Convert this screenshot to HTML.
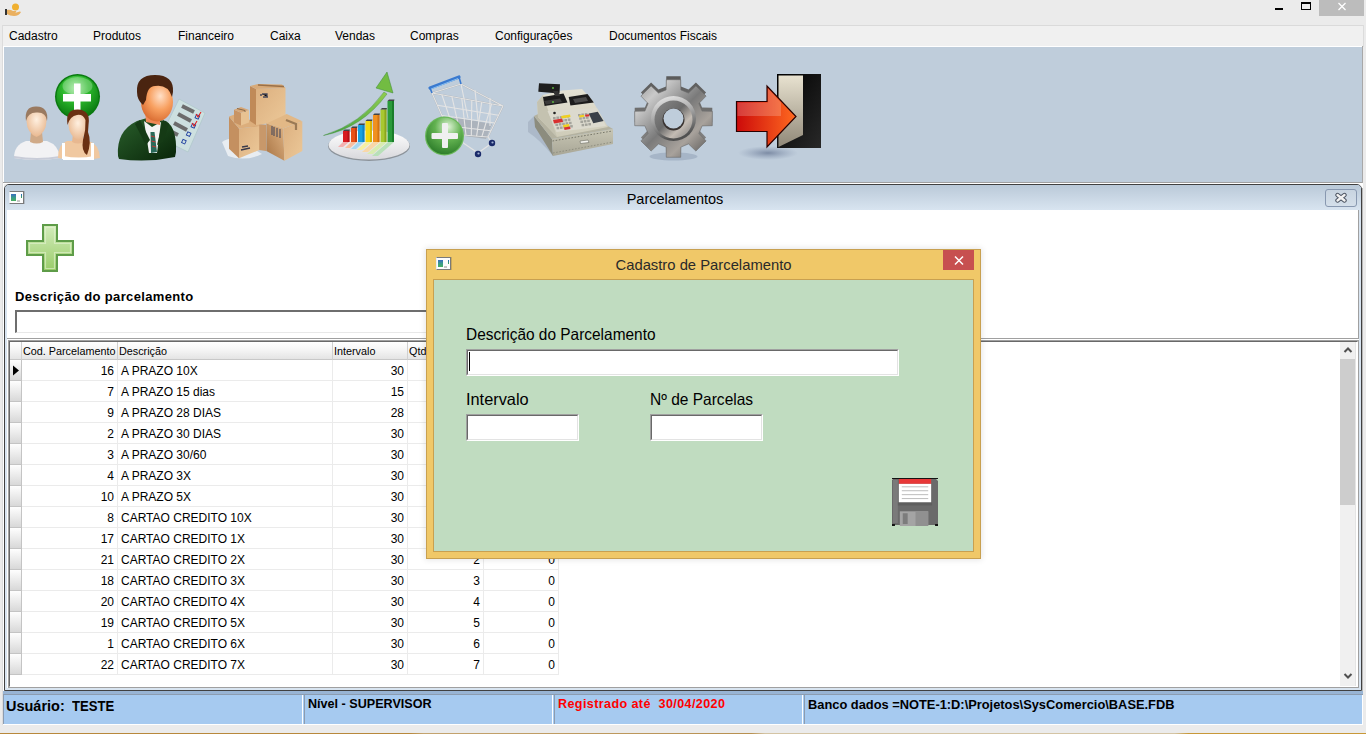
<!DOCTYPE html>
<html><head><meta charset="utf-8">
<style>
*{margin:0;padding:0;box-sizing:border-box}
html,body{width:1366px;height:734px;overflow:hidden;background:#ebebeb;font-family:"Liberation Sans",sans-serif;color:#000}
.a{position:absolute}
.menu span{position:absolute;top:29px;font-size:12px;line-height:14px;white-space:nowrap}
.gtxt{font-size:12px;line-height:14px;white-space:nowrap}
</style></head><body>
<!-- app icon -->
<svg class="a" style="left:4px;top:2px" width="18" height="16" viewBox="0 0 18 16">
<rect x="1" y="7" width="2" height="6" fill="#333"/>
<circle cx="11.5" cy="5" r="3.5" fill="#f0b030"/>
<path d="M3 8 Q6 7 9 9 L12 9 Q13 10 11 11 L14 10 Q16 9 17 10 Q15 14 10 14 Q6 14 3 12 Z" fill="#eab060"/>
</svg>
<!-- window buttons -->
<div class="a" style="left:1275px;top:8px;width:8px;height:2px;background:#000"></div>
<div class="a" style="left:1301px;top:2px;width:10px;height:8px;border:1px solid #000;border-top-width:2px"></div>
<div class="a" style="left:1319px;top:0;width:45px;height:16px;background:#bcbcbc"></div>
<svg class="a" style="left:1337px;top:2px" width="10" height="9" viewBox="0 0 10 9"><path d="M1.5 1 L8.5 8 M8.5 1 L1.5 8" stroke="#fff" stroke-width="1.3"/></svg>

<!-- menu bar -->
<div class="a" style="left:2px;top:25px;width:1362px;height:22px;background:#f0f0f0;border-top:1px solid #dadada;border-left:1px solid #dadada"></div>
<div class="menu">
<span style="left:9px">Cadastro</span>
<span style="left:93px">Produtos</span>
<span style="left:178px">Financeiro</span>
<span style="left:270px">Caixa</span>
<span style="left:335px">Vendas</span>
<span style="left:410px">Compras</span>
<span style="left:495px">Configurações</span>
<span style="left:609px">Documentos Fiscais</span>
</div>

<div class="a" style="left:2px;top:25px;width:1px;height:700px;background:#dcdcdc"></div>
<div class="a" style="left:3px;top:46px;width:1px;height:646px;background:#fff"></div>
<div class="a" style="left:3px;top:46px;width:1360px;height:1px;background:#fff"></div>
<div class="a" style="left:1362px;top:188px;width:1px;height:503px;background:#b8b8b8"></div><div class="a" style="left:1358px;top:183px;width:5px;height:5px;background:#fff"></div>
<!-- toolbar -->
<div class="a" style="left:4px;top:47px;width:1358px;height:135px;background:#bfcddb"></div>
<div class="a" style="left:3px;top:182px;width:1360px;height:1px;background:#a0a0a0"></div>
<div class="a" style="left:3px;top:183px;width:1360px;height:1px;background:#fff"></div>
<svg class="a" style="left:0;top:0" width="1366" height="182" viewBox="0 0 1366 182">
<defs>
<radialGradient id="gcirc" cx="0.45" cy="0.3" r="0.7"><stop offset="0" stop-color="#9ee89a"/><stop offset="0.45" stop-color="#2cb82c"/><stop offset="1" stop-color="#0a7a10"/></radialGradient>
<radialGradient id="skin" cx="0.5" cy="0.4" r="0.6"><stop offset="0" stop-color="#fff0e0"/><stop offset="1" stop-color="#e8b890"/></radialGradient>
<radialGradient id="skin2" cx="0.6" cy="0.35" r="0.7"><stop offset="0" stop-color="#ffe0c8"/><stop offset="0.5" stop-color="#f8a060"/><stop offset="1" stop-color="#d86a30"/></radialGradient>
<linearGradient id="suit" x1="0" y1="0" x2="1" y2="1"><stop offset="0" stop-color="#2a602c"/><stop offset="1" stop-color="#082408"/></linearGradient>
<linearGradient id="bxf" x1="0" y1="0" x2="1" y2="1"><stop offset="0" stop-color="#dcb080"/><stop offset="1" stop-color="#ecc898"/></linearGradient><linearGradient id="bxl" x1="0" y1="1" x2="1" y2="0"><stop offset="0" stop-color="#a87444"/><stop offset="1" stop-color="#e0b484"/></linearGradient><linearGradient id="box" x1="0" y1="0" x2="1" y2="0"><stop offset="0" stop-color="#c89060"/><stop offset="1" stop-color="#ecc698"/></linearGradient>
<linearGradient id="box2" x1="0" y1="0" x2="1" y2="0"><stop offset="0" stop-color="#b07840"/><stop offset="1" stop-color="#e8c090"/></linearGradient>
<linearGradient id="plate" x1="0" y1="0" x2="0" y2="1"><stop offset="0" stop-color="#ffffff"/><stop offset="1" stop-color="#d8d8dc"/></linearGradient>
<linearGradient id="arr" x1="0" y1="1" x2="1" y2="0"><stop offset="0" stop-color="#40a040"/><stop offset="1" stop-color="#90cc50"/></linearGradient>
<radialGradient id="gcirc2" cx="0.6" cy="0.25" r="0.8"><stop offset="0" stop-color="#e0f4d8"/><stop offset="0.45" stop-color="#62b250"/><stop offset="1" stop-color="#2a7a28"/></radialGradient>
<linearGradient id="regbody" x1="0" y1="0" x2="0" y2="1"><stop offset="0" stop-color="#e4e2d4"/><stop offset="1" stop-color="#cecbb8"/></linearGradient><linearGradient id="drawer" x1="0" y1="0" x2="0" y2="1"><stop offset="0" stop-color="#c8c6b4"/><stop offset="1" stop-color="#a8a696"/></linearGradient>
<linearGradient id="gearm" x1="0" y1="0" x2="1" y2="1"><stop offset="0" stop-color="#8a8a8a"/><stop offset="0.22" stop-color="#cacaca"/><stop offset="0.5" stop-color="#7a7a7a"/><stop offset="0.72" stop-color="#a8a29c"/><stop offset="1" stop-color="#484848"/></linearGradient><linearGradient id="gearin" x1="0" y1="0" x2="1" y2="1"><stop offset="0" stop-color="#8a8a8a"/><stop offset="0.45" stop-color="#6a6a6a"/><stop offset="0.7" stop-color="#c4bcb4"/><stop offset="1" stop-color="#7a7a7a"/></linearGradient><linearGradient id="gearback" x1="0" y1="0" x2="0" y2="1"><stop offset="0" stop-color="#5a5a5a"/><stop offset="1" stop-color="#8a8a8a"/></linearGradient>
<linearGradient id="ring" x1="0" y1="0" x2="0.3" y2="1"><stop offset="0" stop-color="#f0f0f0"/><stop offset="0.5" stop-color="#a8a8a8"/><stop offset="1" stop-color="#505050"/></linearGradient>
<linearGradient id="redarr" x1="0" y1="0" x2="1" y2="0"><stop offset="0" stop-color="#cc0a0a"/><stop offset="1" stop-color="#ff6a20"/></linearGradient>
<linearGradient id="door" x1="0" y1="0" x2="0" y2="1"><stop offset="0" stop-color="#e8e2d0"/><stop offset="1" stop-color="#908878"/></linearGradient>
<linearGradient id="doorbk" x1="0" y1="0" x2="1" y2="1"><stop offset="0" stop-color="#000"/><stop offset="1" stop-color="#282828"/></linearGradient>
<radialGradient id="shadow" cx="0.5" cy="0.5" r="0.5"><stop offset="0" stop-color="#506080" stop-opacity="0.6"/><stop offset="1" stop-color="#7080a0" stop-opacity="0"/></radialGradient>
</defs>

<!-- icon1: people add -->
<g>
<circle cx="77.5" cy="96.5" r="22.5" fill="#0a7a10"/>
<circle cx="77.5" cy="96.5" r="21" fill="url(#gcirc)"/>
<ellipse cx="77.5" cy="86" rx="15" ry="9" fill="#fff" opacity="0.25"/>
<rect x="63" y="94" width="28" height="7.5" fill="#fff"/>
<rect x="74" y="83.5" width="6.5" height="29" fill="#fff"/>
<!-- man -->
<path d="M14 158 Q14 145 26 141 L47 141 Q59 145 60 158 Q37 162 14 158 Z" fill="#f2f2f4"/>
<path d="M14 158 Q37 162 60 158 L60 156 Q37 160 14 156 Z" fill="#c8ccd8"/>
<path d="M31 132 L42 132 L43 142 Q37 145 30 142 Z" fill="#d0aa88"/>
<path d="M26.5 121 Q26 108 36.5 108 Q47 108 46.5 121 Q46 133 36.5 137 Q27 133 26.5 121 Z" fill="url(#skin)"/>
<path d="M26 121 Q24 106 36.5 106.5 Q49 107 47 121 Q46 112 37 112.5 Q28 112 26 121 Z" fill="#9a7a60"/>
<!-- woman -->
<path d="M58 158 Q58 144 67 141 L89 141 Q99 144 100 158 Q79 162 58 158 Z" fill="#f0c8a0"/>
<rect x="62" y="143" width="3" height="16" fill="#fff"/>
<rect x="91" y="143" width="3" height="16" fill="#fff"/>
<path d="M63 156 Q79 159 94 156 L94 160 L63 160 Z" fill="#fff"/>
<path d="M73 134 L83 134 L84 142 Q78 145 72 142 Z" fill="#e8b890"/>
<path d="M68.5 125 Q68 112 78 112 Q88 112 87.5 125 Q87 136 78 140 Q69 136 68.5 125 Z" fill="url(#skin)"/>
<path d="M67.5 125 Q65 109 78 109.5 Q91 110 88.5 125 L88 132 Q92 142 87 155 Q81 151 83 140 Q86 130 85.5 120 Q83 114 77 115 Q70 116 67.5 125 Z" fill="#6a3012"/>
</g>

<!-- icon2: businessman -->
<g>
<path d="M179 99 L205 113 L188 152 L160 138 Z" fill="#cde0e0" stroke="#b0c8cc" stroke-width="0.8"/>
<path d="M182 106 L194 112" stroke="#6c6c6c" stroke-width="4"/>
<path d="M178 114 L191 121" stroke="#6c6c6c" stroke-width="4"/>
<path d="M174 123 L187 130" stroke="#6c6c6c" stroke-width="4"/>
<path d="M170 131 L178 135" stroke="#6c6c6c" stroke-width="4"/>
<rect x="195.5" y="115" width="3.5" height="3.5" fill="none" stroke="#2040a0" stroke-width="0.9" transform="rotate(25 197 117)"/>
<path d="M196 114 L198 117 L201 112" stroke="#e02020" stroke-width="1.1" fill="none"/>
<rect x="191.5" y="124" width="3.5" height="3.5" fill="none" stroke="#2040a0" stroke-width="0.9" transform="rotate(25 193 126)"/>
<path d="M192 123 L194 126 L197 121" stroke="#e02020" stroke-width="1.1" fill="none"/>
<rect x="187" y="132.5" width="3.5" height="3.5" fill="none" stroke="#2040a0" stroke-width="0.9" transform="rotate(25 189 134)"/>
<rect x="182" y="140" width="3.5" height="3.5" fill="none" stroke="#2040a0" stroke-width="0.9" transform="rotate(25 184 142)"/>
<path d="M118 156 Q116 131 137 121 L147 118 L166 121 Q177 128 176 152 L175 157 Q147 163 119 159 Z" fill="url(#suit)"/>
<path d="M144 121 L152 127 L161 122 L157 153 L149 153 Z" fill="#f4f4f4"/>
<path d="M150.5 132 L154.5 132 L157 152 L151 153 Z" fill="#2a6a5a"/>
<path d="M151 136 L155 137 M151.5 141 L155.5 142 M152 146 L156 147" stroke="#d03030" stroke-width="0.9"/>
<path d="M140 120 L150 140 L146 145 L135 124 Z" fill="#153a15"/>
<path d="M163 120 L157 145 L163 142 L169 124 Z" fill="#153a15"/>
<path d="M145 110 L160 110 L160 125 L146 122 Z" fill="#f08858"/>
<ellipse cx="157" cy="102" rx="16" ry="19.5" fill="url(#skin2)"/>
<path d="M137 92 Q136 75 155 75 Q174 75 173 92 L172 97 Q168 84 155 86 Q147 86 146 100 L143 105 Q137 100 137 92 Z" fill="#4a2410"/>
</g>

<!-- icon3: boxes -->
<g>
<path d="M222 142 Q230 136 240 140 L262 154 Q245 162 228 156 Z" fill="#eef2f6" opacity="0.85"/>
<path d="M250 123 L266 124.8 L266 151 L259 150 Z" fill="#c8986a"/>
<path d="M229 116.4 L239 128.4 L239 158.3 L229 148.7 Z" fill="#c49060"/>
<path d="M239 128.4 L259.2 126 L259.2 150 L239 158.3 Z" fill="url(#bxf)"/>
<path d="M229 116.4 L236 114 L259.2 124 L259.2 126 L239 128.4 Z" fill="#dcae7c"/>
<path d="M234 109.8 L241 112.8 L241 125.4 L234 122.4 Z" fill="#c89464"/>
<path d="M241 112.8 L249 110 L249 122.4 L241 125.4 Z" fill="#e8c292"/>
<path d="M234 109.8 L241 107 L249 110 L241 112.8 Z" fill="#d8a878"/>
<path d="M237 108.5 L245 110.5 L245 112" stroke="#8a6a48" stroke-width="1" fill="none"/>
<path d="M250 86 L256 89 L256 125 L250 121 Z" fill="#c08a58"/>
<path d="M256 89 L285.5 88 L285.5 121 L256 125 Z" fill="url(#bxf)"/>
<path d="M250 86 L258 84 L282 84.5 L285.5 88 L256 89 Z" fill="#d8aa78"/>
<path d="M258 85 L284 86.5" stroke="#9a7048" stroke-width="1.4"/>
<path d="M266.4 123.6 L283.2 128.4 L284.4 160.7 L266.4 151 Z" fill="url(#bxl)"/>
<path d="M283.2 128.4 L302.3 121.2 L302.3 151.1 L284.4 160.7 Z" fill="url(#bxf)"/>
<path d="M266.4 123.6 L286.7 114 L302.3 121.2 L283.2 128.4 Z" fill="#e2b886"/>
<path d="M286 120 L296 124 L296 130" stroke="#8a6a48" stroke-width="2.2" fill="none" opacity="0.8"/>
<path d="M260 95 L262 95 M262 94 L267 94 L267 97 M263 97 L268 97" stroke="#4a4a5a" stroke-width="1.3"/>
<path d="M272 126 L272 135 M274 127 L274 136 M277 128 L277 137 M280 129 L280 138" stroke="#4a4a5a" stroke-width="1.1"/>
<path d="M241 150 L250 148 M242 147 L248 146" stroke="#3a3a4a" stroke-width="1.5"/>
</g>

<!-- icon4: chart -->
<g>
<ellipse cx="369" cy="146" rx="41" ry="15" fill="#5a5a5a" opacity="0.5"/>
<ellipse cx="369" cy="145" rx="40.5" ry="14.5" fill="url(#plate)"/>
<path d="M343 142 L349 142 L343 147 L338 147 Z" fill="#f4b0b0"/>
<path d="M351 142 L357 142 L350 148 L345 148 Z" fill="#f8c0a0"/>
<path d="M358 142 L364 142 L356 149 L351 149 Z" fill="#a8d8f0"/>
<path d="M366 142 L372 142 L362 150 L357 150 Z" fill="#f8f0a0"/>
<path d="M373 142 L380 142 L368 152 L362 152 Z" fill="#f8d8a8"/>
<path d="M381 142 L387 142 L373 154 L367 154 Z" fill="#d8ecb0"/>
<path d="M388 142 L394 142 L378 156 L372 156 Z" fill="#b8e0b8"/>
<rect x="343" y="131" width="6.5" height="11" fill="#d81a20"/>
<rect x="347.5" y="131" width="2" height="11" fill="#a00c10" opacity="0.6"/>
<path d="M343 131 L344.5 129.5 L350.0 129.5 L349.5 131 Z" fill="#2a2a2a" opacity="0.85"/>
<rect x="351" y="128" width="6" height="14" fill="#e85018"/>
<rect x="355" y="128" width="2" height="14" fill="#b03008" opacity="0.6"/>
<path d="M351 128 L352.5 126.5 L357.5 126.5 L357 128 Z" fill="#2a2a2a" opacity="0.85"/>
<rect x="358" y="125" width="6.5" height="17" fill="#18a0e0"/>
<rect x="362.5" y="125" width="2" height="17" fill="#0a70b0" opacity="0.6"/>
<path d="M358 125 L359.5 123.5 L365.0 123.5 L364.5 125 Z" fill="#2a2a2a" opacity="0.85"/>
<rect x="365.5" y="121" width="6.5" height="21" fill="#f4d810"/>
<rect x="370.0" y="121" width="2" height="21" fill="#c0a000" opacity="0.6"/>
<path d="M365.5 121 L367.0 119.5 L372.5 119.5 L372.0 121 Z" fill="#2a2a2a" opacity="0.85"/>
<rect x="373" y="115" width="6.5" height="27" fill="#f09020"/>
<rect x="377.5" y="115" width="2" height="27" fill="#c06008" opacity="0.6"/>
<path d="M373 115 L374.5 113.5 L380.0 113.5 L379.5 115 Z" fill="#2a2a2a" opacity="0.85"/>
<rect x="380.5" y="109.5" width="6" height="32.5" fill="#a8c830"/>
<rect x="384.5" y="109.5" width="2" height="32.5" fill="#789010" opacity="0.6"/>
<path d="M380.5 109.5 L382.0 108.0 L387.0 108.0 L386.5 109.5 Z" fill="#2a2a2a" opacity="0.85"/>
<rect x="387.5" y="101" width="6.5" height="41" fill="#2a9a3a"/>
<rect x="392.0" y="101" width="2" height="41" fill="#106a20" opacity="0.6"/>
<path d="M387.5 101 L389.0 99.5 L394.5 99.5 L394.0 101 Z" fill="#2a2a2a" opacity="0.85"/>
<path d="M323.5 135.5 Q361 124 384 92 L387 94 Q362 128 323.5 135.5 Z" fill="url(#arr)" stroke="#3a8a30" stroke-width="0.4"/>
<path d="M387 72 L376 88 L393 93 Z" fill="#72bc42" stroke="#3a8a30" stroke-width="0.5"/>
</g>

<!-- icon5: cart -->
<g>
<path d="M453 117 L492 124 L486 139 L451 134 Z" fill="#a8acb4" opacity="0.8"/>
</g>
<g fill="none" stroke="#9a9a9a" stroke-width="1.6" opacity="0.55">
<path d="M432 93 L461 84 L503 106 L488 137 L450 134 Z M432 93 L503 106"/>
</g>
<g fill="none" stroke="#e4e4e4" stroke-width="1.1">
<path d="M432 93 L461 84 L503 106 L488 137 L450 134 Z M432 93 L503 106"/>
<path d="M461 84 L468 118 M475 90 L478 120 M490 98 L490 126"/>
<path d="M437.4 105.3 L498.5 115.3 M441.9 115.5 L494.8 123.0 M446.4 125.8 L491.0 130.8 M441.9 94.8 L455.3 134.4 M451.9 96.6 L460.6 134.8 M461.8 98.5 L466.0 135.3 M471.8 100.3 L471.3 135.7 M481.7 102.1 L476.6 136.1 M491.6 103.9 L481.9 136.5"/>
<path d="M450 134 L478 153 L492 143 L488 137"/>
</g>
<g>
<path d="M430 88 L459 77" stroke="#3a7ad0" stroke-width="3.2" stroke-linecap="round"/>
<path d="M431 89 L458 78.5" stroke="#8ac0f0" stroke-width="1"/>
<path d="M430 88 L432 93 M459 77 L461 84" stroke="#3a7ad0" stroke-width="1.6"/>
<circle cx="478" cy="154" r="3.2" fill="#1a2a6a"/>
<circle cx="478.5" cy="153.5" r="1.1" fill="#a0b0d0"/>
<circle cx="492" cy="143" r="3.2" fill="#1a2a6a"/>
<circle cx="492.5" cy="142.5" r="1.1" fill="#a0b0d0"/>
<circle cx="444.5" cy="136" r="19.5" fill="#6ab85a"/>
<circle cx="444.5" cy="136" r="18.3" fill="url(#gcirc2)"/>
<rect x="431.5" y="133" width="26.5" height="6" rx="1" fill="#f0f0f0"/>
<rect x="442" y="123" width="6" height="25" rx="1" fill="#f0f0f0"/>
</g>

<!-- icon6: cash register -->
<g>
<path d="M528 122 L534 116 L552 140 L553 156 Q540 140 528 132 Z" fill="#9aa6b8" opacity="0.5"/>
<path d="M534 116 L552 139 L553 156 L535 127 Z" fill="#8c8c7e"/>
<path d="M552 139 L613 129 L613 144 L553 156 Z" fill="url(#drawer)"/>
<path d="M534 116 L540 113 L606 125 L613 129 L552 139 Z" fill="#b4b2a0"/>
<path d="M552.5 141 L612.5 131" stroke="#707064" stroke-width="0.9" stroke-dasharray="1.6 1.6"/>
<path d="M553 153 L613 142" stroke="#8a8a7c" stroke-width="0.9" stroke-dasharray="1.6 1.6"/>
<path d="M580 141 L588 140 L589 142.5 L580.5 143.5 Z" fill="#f4f4ee" stroke="#6a6a60" stroke-width="0.6"/>
<path d="M537 102 L543 95 L562 90.5 L582 89 L592 100 L608 127 L557 137 L538 117 Z" fill="url(#regbody)"/>
<path d="M537 102 L543 95 L557 137 L538 117 Z" fill="#c4c2b0"/>
<path d="M547.5 111 L597 108 L606 126 L556.5 132 Z" fill="#dcdace"/>
<path d="M543 97 L563.5 93.5 L567.5 102.6 L544.6 106 Z" fill="#1c1c1c"/>
<path d="M568.7 96.9 L587.5 94 L593.8 102.6 L570.4 105.5 Z" fill="#1c1c1c"/>
<path d="M539 83.2 L560 84.3 L559.5 93.5 L538.3 91.7 Z" fill="#1e1e1e"/><path d="M544 101 L560 98.5 L562 102 L546 104.5 Z" fill="#3a3a3a"/><path d="M573 99 L586 97 L588 101 L575 103 Z" fill="#4a4a4a"/><circle cx="553" cy="88" r="0.9" fill="#60c040"/><circle cx="553" cy="102" r="0.9" fill="#60c040"/>
<path d="M553 91 L558 91 L560 96 L555 96 Z" fill="#333"/>
<path d="M588.7 113.5 L597.8 111.8 L603.6 121 L593.3 123.2 Z" fill="#3a4048"/>
<g fill="#a4a49c">
<rect x="553.0" y="117.0" width="2.6" height="2.4"/>
<rect x="556.4" y="116.5" width="2.6" height="2.4"/>
<rect x="559.8" y="116.1" width="2.6" height="2.4"/>
<rect x="563.2" y="115.7" width="2.6" height="2.4"/>
<rect x="566.6" y="115.2" width="2.6" height="2.4"/>
<rect x="554.2" y="120.3" width="2.6" height="2.4"/>
<rect x="557.6" y="119.8" width="2.6" height="2.4"/>
<rect x="561.0" y="119.4" width="2.6" height="2.4"/>
<rect x="564.4" y="119.0" width="2.6" height="2.4"/>
<rect x="567.8" y="118.5" width="2.6" height="2.4"/>
<rect x="555.4" y="123.6" width="2.6" height="2.4"/>
<rect x="558.8" y="123.1" width="2.6" height="2.4"/>
<rect x="562.2" y="122.7" width="2.6" height="2.4"/>
<rect x="565.6" y="122.2" width="2.6" height="2.4"/>
<rect x="569.0" y="121.8" width="2.6" height="2.4"/>
<rect x="556.6" y="126.9" width="2.6" height="2.4"/>
<rect x="560.0" y="126.5" width="2.6" height="2.4"/>
<rect x="563.4" y="126.0" width="2.6" height="2.4"/>
<rect x="566.8" y="125.6" width="2.6" height="2.4"/>
<rect x="570.2" y="125.1" width="2.6" height="2.4"/>
<rect x="578.0" y="114.0" width="2.6" height="2.4"/>
<rect x="581.4" y="113.5" width="2.6" height="2.4"/>
<rect x="584.8" y="113.1" width="2.6" height="2.4"/>
<rect x="579.2" y="117.3" width="2.6" height="2.4"/>
<rect x="582.6" y="116.8" width="2.6" height="2.4"/>
<rect x="586.0" y="116.4" width="2.6" height="2.4"/>
<rect x="580.4" y="120.6" width="2.6" height="2.4"/>
<rect x="583.8" y="120.1" width="2.6" height="2.4"/>
<rect x="587.2" y="119.7" width="2.6" height="2.4"/>
<rect x="581.6" y="123.9" width="2.6" height="2.4"/>
<rect x="585.0" y="123.5" width="2.6" height="2.4"/>
<rect x="588.4" y="123.0" width="2.6" height="2.4"/>
</g>
<path d="M553 120 L562 118.5 L563 122 L554 123.5 Z" fill="#d83030"/>
<path d="M561 116 L570 114.5 L570.5 117 L562 118.5 Z" fill="#f0d020"/>
<path d="M563 125 L569 124 L569.5 126.5 L563.5 127.5 Z" fill="#f0d020"/>
<path d="M564 127.5 L570 126.5 L570.5 129 L564.5 130 Z" fill="#d83030"/>
<path d="M579 115.5 L584 114.8 L584.5 116.8 L579.5 117.5 Z" fill="#f0d020"/>
<path d="M585 114.8 L589 114.2 L589.5 116.2 L585.5 116.8 Z" fill="#d83030"/>
<circle cx="554.5" cy="113" r="1.3" fill="#222"/>
</g>

<!-- icon7: gear -->
<g transform="translate(673.5 118.5)">
<ellipse cx="0" cy="38" rx="24" ry="4" fill="#8898b0" opacity="0.45"/>
<path transform="translate(0 -3.5)" d="M-7.4 -28.6 L-7.2 -38.8 L7.2 -38.8 L7.4 -28.6 L15.0 -25.4 L22.4 -32.6 L32.6 -22.4 L25.4 -15.0 L28.6 -7.4 L38.8 -7.2 L38.8 7.2 L28.6 7.4 L25.4 15.0 L32.6 22.4 L22.4 32.6 L15.0 25.4 L7.4 28.6 L7.2 38.8 L-7.2 38.8 L-7.4 28.6 L-15.0 25.4 L-22.4 32.6 L-32.6 22.4 L-25.4 15.0 L-28.6 7.4 L-38.8 7.2 L-38.8 -7.2 L-28.6 -7.4 L-25.4 -15.0 L-32.6 -22.4 L-22.4 -32.6 L-15.0 -25.4 Z" fill="url(#gearback)"/>
<path d="M-7.4 -28.6 L-7.2 -38.8 L7.2 -38.8 L7.4 -28.6 L15.0 -25.4 L22.4 -32.6 L32.6 -22.4 L25.4 -15.0 L28.6 -7.4 L38.8 -7.2 L38.8 7.2 L28.6 7.4 L25.4 15.0 L32.6 22.4 L22.4 32.6 L15.0 25.4 L7.4 28.6 L7.2 38.8 L-7.2 38.8 L-7.4 28.6 L-15.0 25.4 L-22.4 32.6 L-32.6 22.4 L-25.4 15.0 L-28.6 7.4 L-38.8 7.2 L-38.8 -7.2 L-28.6 -7.4 L-25.4 -15.0 L-32.6 -22.4 L-22.4 -32.6 L-15.0 -25.4 Z" fill="url(#gearm)" stroke="#6a6a6a" stroke-width="0.6"/>
<circle r="22.5" fill="url(#ring)"/>
<circle cy="1" r="19" fill="url(#gearin)"/>
<circle cy="1" r="11" fill="#3a3432"/>
<circle cy="0" r="10" fill="#bfcddb"/>
</g>
<!-- icon8: exit -->
<g>
<ellipse cx="768" cy="153" rx="30" ry="7" fill="url(#shadow)"/>
<rect x="777" y="74" width="44" height="74" fill="url(#doorbk)"/>
<path d="M778.5 75.5 L803 75.5 L803 135 L778.5 147 Z" fill="url(#door)"/>
<path d="M736.5 101.5 L767 101.5 L767 86 L796 116.5 L767 147 L767 131.5 L736.5 131.5 Z" fill="url(#redarr)" stroke="#2a0000" stroke-width="1.2"/>
<path d="M737.5 102.5 L768 102.5 L768 88.5 L781 102.5 L781 116 L737.5 116 Z" fill="#ffffff" opacity="0.2"/>
</g>
</svg>


<div class="a" style="left:1363px;top:25px;width:1px;height:22px;background:#dcdcdc"></div>
<div class="a" style="left:1362px;top:46px;width:1px;height:137px;background:#a8a8a8"></div>
<!-- MDI child -->
<div class="a" style="left:4px;top:184px;width:1358px;height:507px;border:1px solid #404040;border-radius:5px 5px 0 0;background:#d8e4f0"></div>
<div class="a" style="left:5px;top:185px;width:1356px;height:25px;border-radius:4px 4px 0 0;background:linear-gradient(#bac9d8,#d8e4f0)"></div>
<div class="a" style="left:7px;top:210px;width:1352px;height:478px;background:#fff"></div>
<div class="a" style="left:9px;top:191px;width:15px;height:13px;background:#fdfdfd;border-top:1px solid #7a7a7a;border-bottom:1px solid #7a7a7a;border-right:1px solid #7a7a7a;border-left:1px solid #e8eef4;box-shadow:1px 0 0 rgba(0,0,0,0.15)"><div class="a" style="left:1px;top:2px;width:5px;height:7px;background:linear-gradient(#3a6cc0,#3a9a8a 50%,#48b060)"></div><div class="a" style="left:11px;top:2px;width:1px;height:4px;background:linear-gradient(#2a60c8,#40b050)"></div><div class="a" style="left:7px;top:8px;width:3px;height:2px;background:#c8c8c8"></div></div>
<div class="a" style="left:575px;top:191px;width:200px;text-align:center;font-size:14.5px;line-height:17px;color:#000">Parcelamentos</div>
<div class="a" style="left:1325px;top:189px;width:32px;height:18px;border:1px solid #8898b0;border-radius:3px;background:linear-gradient(#c8d4e0,#d4dfea)"></div>
<svg class="a" style="left:1334px;top:192px" width="14" height="12" viewBox="0 0 14 12"><path d="M3.5 3 L10.5 8.5 M10.5 3 L3.5 8.5" stroke="#4a5260" stroke-width="4.4" stroke-linecap="round"/><path d="M3.5 3 L10.5 8.5 M10.5 3 L3.5 8.5" stroke="#f2f2f2" stroke-width="2.4" stroke-linecap="round"/></svg>
<svg class="a" style="left:26px;top:224px" width="48" height="48" viewBox="0 0 48 48"><defs><linearGradient id="pg" x1="0" y1="0" x2="0" y2="1"><stop offset="0" stop-color="#d4ecbc"/><stop offset="1" stop-color="#98cc68"/></linearGradient></defs><path d="M17 1 H31 V17 H47 V31 H31 V47 H17 V31 H1 V17 H17 Z" fill="url(#pg)" stroke="#5e9c48" stroke-width="2"/><path d="M19.5 3.5 H28.5 V19.5 H44.5 V28.5 H28.5 V44.5 H19.5 V28.5 H3.5 V19.5 H19.5 Z" fill="none" stroke="#e4f4d4" stroke-opacity="0.6" stroke-width="1.2"/></svg>
<div class="a" style="left:15px;top:289px;font-size:13px;font-weight:bold;line-height:15px;letter-spacing:0.35px;white-space:nowrap">Descrição do parcelamento</div>
<div class="a" style="left:15px;top:310px;width:500px;height:23px;background:#fff;border-top:2px solid #6e6e6e;border-left:2px solid #6e6e6e;border-bottom:1px solid #e8e8e8"></div>
<div class="a" style="left:7px;top:338px;width:1352px;height:1px;background:#a0a0a0"></div>
<div class="a" style="left:1358px;top:210px;width:1px;height:129px;background:#a0a0a0"></div>
<div class="a" style="left:8px;top:340px;width:1351px;height:348px;border-top:1px solid #a0a0a0;border-left:1px solid #a0a0a0;border-right:1px solid #a0a0a0;border-bottom:1px solid #a0a0a0"></div>
<div class="a" style="left:9px;top:341px;width:1349px;height:346px;border-top:1px solid #696969;border-left:1px solid #696969;border-right:1px solid #fff;border-bottom:1px solid #fff"></div>
<div class="a" style="left:10px;top:342px;width:12px;height:18px;background:linear-gradient(#ffffff,#f4f4f4 50%,#e4e4e4);border-right:1px solid #d0d0d0;border-bottom:1px solid #c8c8c8;overflow:hidden"><span class="a" style="left:1px;top:3px;font-size:10.8px;line-height:13px;white-space:nowrap;color:#000"></span></div>
<div class="a" style="left:22px;top:342px;width:96px;height:18px;background:linear-gradient(#ffffff,#f4f4f4 50%,#e4e4e4);border-right:1px solid #d0d0d0;border-bottom:1px solid #c8c8c8;overflow:hidden"><span class="a" style="left:1px;top:3px;font-size:10.8px;line-height:13px;white-space:nowrap;color:#000">Cod. Parcelamento</span></div>
<div class="a" style="left:118px;top:342px;width:215px;height:18px;background:linear-gradient(#ffffff,#f4f4f4 50%,#e4e4e4);border-right:1px solid #d0d0d0;border-bottom:1px solid #c8c8c8;overflow:hidden"><span class="a" style="left:1px;top:3px;font-size:10.8px;line-height:13px;white-space:nowrap;color:#000">Descrição</span></div>
<div class="a" style="left:333px;top:342px;width:75px;height:18px;background:linear-gradient(#ffffff,#f4f4f4 50%,#e4e4e4);border-right:1px solid #d0d0d0;border-bottom:1px solid #c8c8c8;overflow:hidden"><span class="a" style="left:1px;top:3px;font-size:10.8px;line-height:13px;white-space:nowrap;color:#000">Intervalo</span></div>
<div class="a" style="left:408px;top:342px;width:76px;height:18px;background:linear-gradient(#ffffff,#f4f4f4 50%,#e4e4e4);border-right:1px solid #d0d0d0;border-bottom:1px solid #c8c8c8;overflow:hidden"><span class="a" style="left:1px;top:3px;font-size:10.8px;line-height:13px;white-space:nowrap;color:#000">Qtde Parcelas</span></div>
<div class="a" style="left:484px;top:342px;width:75px;height:18px;background:linear-gradient(#ffffff,#f4f4f4 50%,#e4e4e4);border-right:1px solid #d0d0d0;border-bottom:1px solid #c8c8c8;overflow:hidden"><span class="a" style="left:1px;top:3px;font-size:10.8px;line-height:13px;white-space:nowrap;color:#000"></span></div>
<div class="a" style="left:10px;top:360px;width:12px;height:21px;background:linear-gradient(#fefefe,#d8d8d8);border-right:1px solid #c4c4c4;border-bottom:1px solid #c4c4c4"></div>
<div class="a" style="left:22px;top:380px;width:537px;height:1px;background:#ebebeb"></div>
<div class="a" style="left:117px;top:360px;width:1px;height:21px;background:#ebebeb"></div>
<div class="a" style="left:332px;top:360px;width:1px;height:21px;background:#ebebeb"></div>
<div class="a" style="left:407px;top:360px;width:1px;height:21px;background:#ebebeb"></div>
<div class="a" style="left:483px;top:360px;width:1px;height:21px;background:#ebebeb"></div>
<div class="a" style="left:558px;top:360px;width:1px;height:21px;background:#ebebeb"></div>
<div class="a gtxt" style="left:22px;top:364px;width:92px;text-align:right;font-size:12px">16</div>
<div class="a gtxt" style="left:121px;top:364px;font-size:12px">A PRAZO 10X</div>
<div class="a gtxt" style="left:333px;top:364px;width:71px;text-align:right;font-size:12px">30</div>
<div class="a" style="left:10px;top:381px;width:12px;height:21px;background:linear-gradient(#fefefe,#d8d8d8);border-right:1px solid #c4c4c4;border-bottom:1px solid #c4c4c4"></div>
<div class="a" style="left:22px;top:401px;width:537px;height:1px;background:#ebebeb"></div>
<div class="a" style="left:117px;top:381px;width:1px;height:21px;background:#ebebeb"></div>
<div class="a" style="left:332px;top:381px;width:1px;height:21px;background:#ebebeb"></div>
<div class="a" style="left:407px;top:381px;width:1px;height:21px;background:#ebebeb"></div>
<div class="a" style="left:483px;top:381px;width:1px;height:21px;background:#ebebeb"></div>
<div class="a" style="left:558px;top:381px;width:1px;height:21px;background:#ebebeb"></div>
<div class="a gtxt" style="left:22px;top:385px;width:92px;text-align:right;font-size:12px">7</div>
<div class="a gtxt" style="left:121px;top:385px;font-size:12px">A PRAZO 15 dias</div>
<div class="a gtxt" style="left:333px;top:385px;width:71px;text-align:right;font-size:12px">15</div>
<div class="a" style="left:10px;top:402px;width:12px;height:21px;background:linear-gradient(#fefefe,#d8d8d8);border-right:1px solid #c4c4c4;border-bottom:1px solid #c4c4c4"></div>
<div class="a" style="left:22px;top:422px;width:537px;height:1px;background:#ebebeb"></div>
<div class="a" style="left:117px;top:402px;width:1px;height:21px;background:#ebebeb"></div>
<div class="a" style="left:332px;top:402px;width:1px;height:21px;background:#ebebeb"></div>
<div class="a" style="left:407px;top:402px;width:1px;height:21px;background:#ebebeb"></div>
<div class="a" style="left:483px;top:402px;width:1px;height:21px;background:#ebebeb"></div>
<div class="a" style="left:558px;top:402px;width:1px;height:21px;background:#ebebeb"></div>
<div class="a gtxt" style="left:22px;top:406px;width:92px;text-align:right;font-size:12px">9</div>
<div class="a gtxt" style="left:121px;top:406px;font-size:12px">A PRAZO 28 DIAS</div>
<div class="a gtxt" style="left:333px;top:406px;width:71px;text-align:right;font-size:12px">28</div>
<div class="a" style="left:10px;top:423px;width:12px;height:21px;background:linear-gradient(#fefefe,#d8d8d8);border-right:1px solid #c4c4c4;border-bottom:1px solid #c4c4c4"></div>
<div class="a" style="left:22px;top:443px;width:537px;height:1px;background:#ebebeb"></div>
<div class="a" style="left:117px;top:423px;width:1px;height:21px;background:#ebebeb"></div>
<div class="a" style="left:332px;top:423px;width:1px;height:21px;background:#ebebeb"></div>
<div class="a" style="left:407px;top:423px;width:1px;height:21px;background:#ebebeb"></div>
<div class="a" style="left:483px;top:423px;width:1px;height:21px;background:#ebebeb"></div>
<div class="a" style="left:558px;top:423px;width:1px;height:21px;background:#ebebeb"></div>
<div class="a gtxt" style="left:22px;top:427px;width:92px;text-align:right;font-size:12px">2</div>
<div class="a gtxt" style="left:121px;top:427px;font-size:12px">A PRAZO 30 DIAS</div>
<div class="a gtxt" style="left:333px;top:427px;width:71px;text-align:right;font-size:12px">30</div>
<div class="a" style="left:10px;top:444px;width:12px;height:21px;background:linear-gradient(#fefefe,#d8d8d8);border-right:1px solid #c4c4c4;border-bottom:1px solid #c4c4c4"></div>
<div class="a" style="left:22px;top:464px;width:537px;height:1px;background:#ebebeb"></div>
<div class="a" style="left:117px;top:444px;width:1px;height:21px;background:#ebebeb"></div>
<div class="a" style="left:332px;top:444px;width:1px;height:21px;background:#ebebeb"></div>
<div class="a" style="left:407px;top:444px;width:1px;height:21px;background:#ebebeb"></div>
<div class="a" style="left:483px;top:444px;width:1px;height:21px;background:#ebebeb"></div>
<div class="a" style="left:558px;top:444px;width:1px;height:21px;background:#ebebeb"></div>
<div class="a gtxt" style="left:22px;top:448px;width:92px;text-align:right;font-size:12px">3</div>
<div class="a gtxt" style="left:121px;top:448px;font-size:12px">A PRAZO 30/60</div>
<div class="a gtxt" style="left:333px;top:448px;width:71px;text-align:right;font-size:12px">30</div>
<div class="a" style="left:10px;top:465px;width:12px;height:21px;background:linear-gradient(#fefefe,#d8d8d8);border-right:1px solid #c4c4c4;border-bottom:1px solid #c4c4c4"></div>
<div class="a" style="left:22px;top:485px;width:537px;height:1px;background:#ebebeb"></div>
<div class="a" style="left:117px;top:465px;width:1px;height:21px;background:#ebebeb"></div>
<div class="a" style="left:332px;top:465px;width:1px;height:21px;background:#ebebeb"></div>
<div class="a" style="left:407px;top:465px;width:1px;height:21px;background:#ebebeb"></div>
<div class="a" style="left:483px;top:465px;width:1px;height:21px;background:#ebebeb"></div>
<div class="a" style="left:558px;top:465px;width:1px;height:21px;background:#ebebeb"></div>
<div class="a gtxt" style="left:22px;top:469px;width:92px;text-align:right;font-size:12px">4</div>
<div class="a gtxt" style="left:121px;top:469px;font-size:12px">A PRAZO 3X</div>
<div class="a gtxt" style="left:333px;top:469px;width:71px;text-align:right;font-size:12px">30</div>
<div class="a" style="left:10px;top:486px;width:12px;height:21px;background:linear-gradient(#fefefe,#d8d8d8);border-right:1px solid #c4c4c4;border-bottom:1px solid #c4c4c4"></div>
<div class="a" style="left:22px;top:506px;width:537px;height:1px;background:#ebebeb"></div>
<div class="a" style="left:117px;top:486px;width:1px;height:21px;background:#ebebeb"></div>
<div class="a" style="left:332px;top:486px;width:1px;height:21px;background:#ebebeb"></div>
<div class="a" style="left:407px;top:486px;width:1px;height:21px;background:#ebebeb"></div>
<div class="a" style="left:483px;top:486px;width:1px;height:21px;background:#ebebeb"></div>
<div class="a" style="left:558px;top:486px;width:1px;height:21px;background:#ebebeb"></div>
<div class="a gtxt" style="left:22px;top:490px;width:92px;text-align:right;font-size:12px">10</div>
<div class="a gtxt" style="left:121px;top:490px;font-size:12px">A PRAZO 5X</div>
<div class="a gtxt" style="left:333px;top:490px;width:71px;text-align:right;font-size:12px">30</div>
<div class="a" style="left:10px;top:507px;width:12px;height:21px;background:linear-gradient(#fefefe,#d8d8d8);border-right:1px solid #c4c4c4;border-bottom:1px solid #c4c4c4"></div>
<div class="a" style="left:22px;top:527px;width:537px;height:1px;background:#ebebeb"></div>
<div class="a" style="left:117px;top:507px;width:1px;height:21px;background:#ebebeb"></div>
<div class="a" style="left:332px;top:507px;width:1px;height:21px;background:#ebebeb"></div>
<div class="a" style="left:407px;top:507px;width:1px;height:21px;background:#ebebeb"></div>
<div class="a" style="left:483px;top:507px;width:1px;height:21px;background:#ebebeb"></div>
<div class="a" style="left:558px;top:507px;width:1px;height:21px;background:#ebebeb"></div>
<div class="a gtxt" style="left:22px;top:511px;width:92px;text-align:right;font-size:12px">8</div>
<div class="a gtxt" style="left:121px;top:511px;font-size:12px">CARTAO CREDITO 10X</div>
<div class="a gtxt" style="left:333px;top:511px;width:71px;text-align:right;font-size:12px">30</div>
<div class="a" style="left:10px;top:528px;width:12px;height:21px;background:linear-gradient(#fefefe,#d8d8d8);border-right:1px solid #c4c4c4;border-bottom:1px solid #c4c4c4"></div>
<div class="a" style="left:22px;top:548px;width:537px;height:1px;background:#ebebeb"></div>
<div class="a" style="left:117px;top:528px;width:1px;height:21px;background:#ebebeb"></div>
<div class="a" style="left:332px;top:528px;width:1px;height:21px;background:#ebebeb"></div>
<div class="a" style="left:407px;top:528px;width:1px;height:21px;background:#ebebeb"></div>
<div class="a" style="left:483px;top:528px;width:1px;height:21px;background:#ebebeb"></div>
<div class="a" style="left:558px;top:528px;width:1px;height:21px;background:#ebebeb"></div>
<div class="a gtxt" style="left:22px;top:532px;width:92px;text-align:right;font-size:12px">17</div>
<div class="a gtxt" style="left:121px;top:532px;font-size:12px">CARTAO CREDITO 1X</div>
<div class="a gtxt" style="left:333px;top:532px;width:71px;text-align:right;font-size:12px">30</div>
<div class="a" style="left:10px;top:549px;width:12px;height:21px;background:linear-gradient(#fefefe,#d8d8d8);border-right:1px solid #c4c4c4;border-bottom:1px solid #c4c4c4"></div>
<div class="a" style="left:22px;top:569px;width:537px;height:1px;background:#ebebeb"></div>
<div class="a" style="left:117px;top:549px;width:1px;height:21px;background:#ebebeb"></div>
<div class="a" style="left:332px;top:549px;width:1px;height:21px;background:#ebebeb"></div>
<div class="a" style="left:407px;top:549px;width:1px;height:21px;background:#ebebeb"></div>
<div class="a" style="left:483px;top:549px;width:1px;height:21px;background:#ebebeb"></div>
<div class="a" style="left:558px;top:549px;width:1px;height:21px;background:#ebebeb"></div>
<div class="a gtxt" style="left:22px;top:553px;width:92px;text-align:right;font-size:12px">21</div>
<div class="a gtxt" style="left:121px;top:553px;font-size:12px">CARTAO CREDITO 2X</div>
<div class="a gtxt" style="left:333px;top:553px;width:71px;text-align:right;font-size:12px">30</div>
<div class="a gtxt" style="left:408px;top:553px;width:72px;text-align:right;font-size:12px">2</div>
<div class="a gtxt" style="left:484px;top:553px;width:71px;text-align:right;font-size:12px">0</div>
<div class="a" style="left:10px;top:570px;width:12px;height:21px;background:linear-gradient(#fefefe,#d8d8d8);border-right:1px solid #c4c4c4;border-bottom:1px solid #c4c4c4"></div>
<div class="a" style="left:22px;top:590px;width:537px;height:1px;background:#ebebeb"></div>
<div class="a" style="left:117px;top:570px;width:1px;height:21px;background:#ebebeb"></div>
<div class="a" style="left:332px;top:570px;width:1px;height:21px;background:#ebebeb"></div>
<div class="a" style="left:407px;top:570px;width:1px;height:21px;background:#ebebeb"></div>
<div class="a" style="left:483px;top:570px;width:1px;height:21px;background:#ebebeb"></div>
<div class="a" style="left:558px;top:570px;width:1px;height:21px;background:#ebebeb"></div>
<div class="a gtxt" style="left:22px;top:574px;width:92px;text-align:right;font-size:12px">18</div>
<div class="a gtxt" style="left:121px;top:574px;font-size:12px">CARTAO CREDITO 3X</div>
<div class="a gtxt" style="left:333px;top:574px;width:71px;text-align:right;font-size:12px">30</div>
<div class="a gtxt" style="left:408px;top:574px;width:72px;text-align:right;font-size:12px">3</div>
<div class="a gtxt" style="left:484px;top:574px;width:71px;text-align:right;font-size:12px">0</div>
<div class="a" style="left:10px;top:591px;width:12px;height:21px;background:linear-gradient(#fefefe,#d8d8d8);border-right:1px solid #c4c4c4;border-bottom:1px solid #c4c4c4"></div>
<div class="a" style="left:22px;top:611px;width:537px;height:1px;background:#ebebeb"></div>
<div class="a" style="left:117px;top:591px;width:1px;height:21px;background:#ebebeb"></div>
<div class="a" style="left:332px;top:591px;width:1px;height:21px;background:#ebebeb"></div>
<div class="a" style="left:407px;top:591px;width:1px;height:21px;background:#ebebeb"></div>
<div class="a" style="left:483px;top:591px;width:1px;height:21px;background:#ebebeb"></div>
<div class="a" style="left:558px;top:591px;width:1px;height:21px;background:#ebebeb"></div>
<div class="a gtxt" style="left:22px;top:595px;width:92px;text-align:right;font-size:12px">20</div>
<div class="a gtxt" style="left:121px;top:595px;font-size:12px">CARTAO CREDITO 4X</div>
<div class="a gtxt" style="left:333px;top:595px;width:71px;text-align:right;font-size:12px">30</div>
<div class="a gtxt" style="left:408px;top:595px;width:72px;text-align:right;font-size:12px">4</div>
<div class="a gtxt" style="left:484px;top:595px;width:71px;text-align:right;font-size:12px">0</div>
<div class="a" style="left:10px;top:612px;width:12px;height:21px;background:linear-gradient(#fefefe,#d8d8d8);border-right:1px solid #c4c4c4;border-bottom:1px solid #c4c4c4"></div>
<div class="a" style="left:22px;top:632px;width:537px;height:1px;background:#ebebeb"></div>
<div class="a" style="left:117px;top:612px;width:1px;height:21px;background:#ebebeb"></div>
<div class="a" style="left:332px;top:612px;width:1px;height:21px;background:#ebebeb"></div>
<div class="a" style="left:407px;top:612px;width:1px;height:21px;background:#ebebeb"></div>
<div class="a" style="left:483px;top:612px;width:1px;height:21px;background:#ebebeb"></div>
<div class="a" style="left:558px;top:612px;width:1px;height:21px;background:#ebebeb"></div>
<div class="a gtxt" style="left:22px;top:616px;width:92px;text-align:right;font-size:12px">19</div>
<div class="a gtxt" style="left:121px;top:616px;font-size:12px">CARTAO CREDITO 5X</div>
<div class="a gtxt" style="left:333px;top:616px;width:71px;text-align:right;font-size:12px">30</div>
<div class="a gtxt" style="left:408px;top:616px;width:72px;text-align:right;font-size:12px">5</div>
<div class="a gtxt" style="left:484px;top:616px;width:71px;text-align:right;font-size:12px">0</div>
<div class="a" style="left:10px;top:633px;width:12px;height:21px;background:linear-gradient(#fefefe,#d8d8d8);border-right:1px solid #c4c4c4;border-bottom:1px solid #c4c4c4"></div>
<div class="a" style="left:22px;top:653px;width:537px;height:1px;background:#ebebeb"></div>
<div class="a" style="left:117px;top:633px;width:1px;height:21px;background:#ebebeb"></div>
<div class="a" style="left:332px;top:633px;width:1px;height:21px;background:#ebebeb"></div>
<div class="a" style="left:407px;top:633px;width:1px;height:21px;background:#ebebeb"></div>
<div class="a" style="left:483px;top:633px;width:1px;height:21px;background:#ebebeb"></div>
<div class="a" style="left:558px;top:633px;width:1px;height:21px;background:#ebebeb"></div>
<div class="a gtxt" style="left:22px;top:637px;width:92px;text-align:right;font-size:12px">1</div>
<div class="a gtxt" style="left:121px;top:637px;font-size:12px">CARTAO CREDITO 6X</div>
<div class="a gtxt" style="left:333px;top:637px;width:71px;text-align:right;font-size:12px">30</div>
<div class="a gtxt" style="left:408px;top:637px;width:72px;text-align:right;font-size:12px">6</div>
<div class="a gtxt" style="left:484px;top:637px;width:71px;text-align:right;font-size:12px">0</div>
<div class="a" style="left:10px;top:654px;width:12px;height:21px;background:linear-gradient(#fefefe,#d8d8d8);border-right:1px solid #c4c4c4;border-bottom:1px solid #c4c4c4"></div>
<div class="a" style="left:22px;top:674px;width:537px;height:1px;background:#ebebeb"></div>
<div class="a" style="left:117px;top:654px;width:1px;height:21px;background:#ebebeb"></div>
<div class="a" style="left:332px;top:654px;width:1px;height:21px;background:#ebebeb"></div>
<div class="a" style="left:407px;top:654px;width:1px;height:21px;background:#ebebeb"></div>
<div class="a" style="left:483px;top:654px;width:1px;height:21px;background:#ebebeb"></div>
<div class="a" style="left:558px;top:654px;width:1px;height:21px;background:#ebebeb"></div>
<div class="a gtxt" style="left:22px;top:658px;width:92px;text-align:right;font-size:12px">22</div>
<div class="a gtxt" style="left:121px;top:658px;font-size:12px">CARTAO CREDITO 7X</div>
<div class="a gtxt" style="left:333px;top:658px;width:71px;text-align:right;font-size:12px">30</div>
<div class="a gtxt" style="left:408px;top:658px;width:72px;text-align:right;font-size:12px">7</div>
<div class="a gtxt" style="left:484px;top:658px;width:71px;text-align:right;font-size:12px">0</div>
<svg class="a" style="left:12px;top:365px" width="8" height="11" viewBox="0 0 8 11"><path d="M1 0.5 L7 5.5 L1 10.5 Z" fill="#000"/></svg>
<div class="a" style="left:1340px;top:342px;width:16px;height:344px;background:#f0f0f0;border-right:1px solid #e4e4e4"></div>
<div class="a" style="left:1340px;top:359px;width:15px;height:146px;background:#cdcdcd"></div>
<svg class="a" style="left:1343px;top:346px" width="10" height="8" viewBox="0 0 10 8"><path d="M1.5 6 L5 2.5 L8.5 6" fill="none" stroke="#505050" stroke-width="2"/></svg>
<svg class="a" style="left:1343px;top:672px" width="10" height="8" viewBox="0 0 10 8"><path d="M1.5 2 L5 5.5 L8.5 2" fill="none" stroke="#505050" stroke-width="2"/></svg>

<div class="a" style="left:426px;top:249px;width:555px;height:310px;box-shadow:0 0 6px 1px rgba(0,0,0,0.10)"></div>
<div class="a" style="left:426px;top:249px;width:555px;height:310px;background:#f0c868;border:1px solid #c8a050"></div>
<div class="a" style="left:433px;top:279px;width:541px;height:273px;background:#c0dcc0;border:1px solid #c8a050"></div>
<div class="a" style="left:436px;top:257px;width:15px;height:13px;background:#fdfdfd;border-top:1px solid #7a7a7a;border-bottom:1px solid #7a7a7a;border-right:1px solid #7a7a7a;border-left:1px solid #e8eef4;box-shadow:1px 0 0 rgba(0,0,0,0.15)"><div class="a" style="left:1px;top:2px;width:5px;height:7px;background:linear-gradient(#3a6cc0,#3a9a8a 50%,#48b060)"></div><div class="a" style="left:11px;top:2px;width:1px;height:4px;background:linear-gradient(#2a60c8,#40b050)"></div><div class="a" style="left:7px;top:8px;width:3px;height:2px;background:#c8c8c8"></div></div>
<div class="a" style="left:426px;top:257px;width:555px;text-align:center;font-size:14.8px;line-height:17px;color:#2a2a2a;white-space:nowrap">Cadastro de Parcelamento</div>
<div class="a" style="left:943px;top:250px;width:31px;height:20px;background:#c75050"></div>
<svg class="a" style="left:953px;top:255px" width="12" height="11" viewBox="0 0 12 11"><path d="M2 1.5 L10 9.5 M10 1.5 L2 9.5" stroke="#fff" stroke-width="1.5"/></svg>
<div class="a" style="left:466px;top:325px;font-size:16.5px;line-height:19px;white-space:nowrap;color:#000;transform:scaleX(0.935);transform-origin:0 0">Descrição do Parcelamento</div>
<div class="a" style="left:466px;top:390px;font-size:16.5px;line-height:19px;white-space:nowrap;color:#000;transform:scaleX(0.99);transform-origin:0 0">Intervalo</div>
<div class="a" style="left:650px;top:390px;font-size:16.5px;line-height:19px;white-space:nowrap;color:#000;transform:scaleX(0.94);transform-origin:0 0">Nº de Parcelas</div>
<div class="a" style="left:466px;top:349px;width:433px;height:27px;background:#fff;border-top:1px solid #a0a0a0;border-left:1px solid #a0a0a0;border-right:1px solid #fff;border-bottom:1px solid #fff"><div class="a" style="left:0;top:0;right:0;bottom:0;border-top:1px solid #696969;border-left:1px solid #696969;border-right:1px solid #e3e3e3;border-bottom:1px solid #e3e3e3"></div></div>
<div class="a" style="left:466px;top:414px;width:113px;height:27px;background:#fff;border-top:1px solid #a0a0a0;border-left:1px solid #a0a0a0;border-right:1px solid #fff;border-bottom:1px solid #fff"><div class="a" style="left:0;top:0;right:0;bottom:0;border-top:1px solid #696969;border-left:1px solid #696969;border-right:1px solid #e3e3e3;border-bottom:1px solid #e3e3e3"></div></div>
<div class="a" style="left:650px;top:414px;width:113px;height:27px;background:#fff;border-top:1px solid #a0a0a0;border-left:1px solid #a0a0a0;border-right:1px solid #fff;border-bottom:1px solid #fff"><div class="a" style="left:0;top:0;right:0;bottom:0;border-top:1px solid #696969;border-left:1px solid #696969;border-right:1px solid #e3e3e3;border-bottom:1px solid #e3e3e3"></div></div>
<div class="a" style="left:469px;top:352px;width:1px;height:19px;background:#000"></div>
<svg class="a" style="left:892px;top:478px" width="46" height="48" viewBox="0 0 47 49" preserveAspectRatio="none">
<path d="M2 0 H44 L47 3 V48 H0 V2 Z" fill="#6a6a6a"/>
<rect x="0" y="0" width="47" height="1" fill="#111"/>
<rect x="1" y="2" width="5" height="44" fill="#7a7a7a"/>
<rect x="7" y="1" width="33" height="5" fill="#e83838"/>
<rect x="7" y="6" width="33" height="19" fill="#fff"/>
<rect x="10" y="8.5" width="27" height="1" fill="#bcbcbc"/>
<rect x="10" y="12.5" width="27" height="1" fill="#bcbcbc"/>
<rect x="10" y="16.5" width="27" height="1" fill="#bcbcbc"/>
<rect x="10" y="20.5" width="27" height="1" fill="#bcbcbc"/>
<rect x="6" y="25" width="35" height="3" fill="#5e5e5e"/>
<rect x="8" y="34" width="29" height="15" fill="#a4a4a4"/>
<rect x="11" y="36" width="5" height="11" fill="#7c7c7c"/>
<rect x="24" y="34" width="13" height="15" fill="#909090"/>
<rect x="0" y="47" width="3" height="2" fill="#111"/>
<rect x="44" y="47" width="3" height="2" fill="#111"/>
</svg>
<!-- status bar -->
<div class="a" style="left:3px;top:691px;width:1360px;height:3px;background:#98b4d4"></div>
<div class="a" style="left:3px;top:694px;width:1360px;height:1px;background:#8c9cb0"></div>
<div class="a" style="left:3px;top:695px;width:1360px;height:29px;background:#a6caf0"></div>
<div class="a" style="left:3px;top:724px;width:1360px;height:1px;background:#fff"></div>
<div class="a" style="left:0;top:733px;width:1366px;height:1px;background:linear-gradient(90deg,#b8883c,#b8883c 30%,#c4a470 31%,#b89050 55%,#d4c4a4 56%,#d4c4a4 86%,#c89838 87%,#c89838)"></div>
<div class="a" style="left:3px;top:695px;width:300px;height:29px;border-left:1px solid #8c9cb0;border-right:1px solid #fff"></div>
<div class="a" style="left:304px;top:695px;width:249px;height:29px;border-left:1px solid #8c9cb0;border-right:1px solid #fff"></div>
<div class="a" style="left:554px;top:695px;width:249px;height:29px;border-left:1px solid #8c9cb0;border-right:1px solid #fff"></div>
<div class="a" style="left:804px;top:695px;width:559px;height:29px;border-left:1px solid #8c9cb0;border-right:1px solid #fff"></div>
<div class="a" style="left:6px;top:699px;font-size:13.8px;font-weight:bold;line-height:16px;white-space:pre;transform:scaleX(1.05);transform-origin:0 0">Usuário:</div><div class="a" style="left:72px;top:699px;font-size:13.8px;font-weight:bold;line-height:16px;white-space:pre;transform:scaleX(0.95);transform-origin:0 0">TESTE</div>
<div class="a" style="left:308px;top:697px;font-size:12.6px;font-weight:bold;line-height:15px;white-space:pre">Nível - SUPERVISOR</div>
<div class="a" style="left:558px;top:697px;font-size:12.6px;font-weight:bold;line-height:15px;white-space:pre;color:#f00;letter-spacing:0.38px">Registrado até  30/04/2020</div>
<div class="a" style="left:808px;top:697px;font-size:12.85px;font-weight:bold;line-height:15px;white-space:pre">Banco dados =NOTE-1:D:\Projetos\SysComercio\BASE.FDB</div>
</body></html>
